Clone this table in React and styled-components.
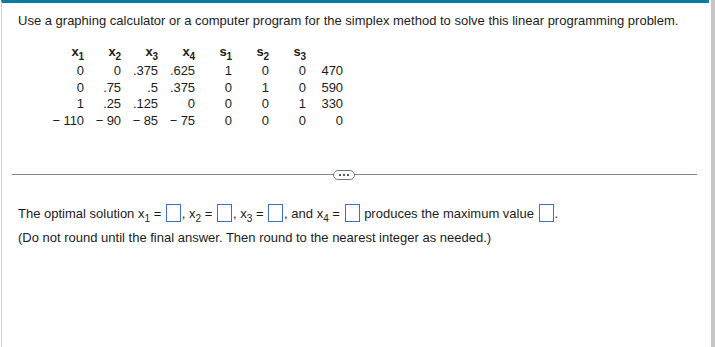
import React from 'react';
import styled, { createGlobalStyle } from 'styled-components';

const GlobalStyle = createGlobalStyle`
  body {
    margin: 0;
    background: #fff;
    font-family: "Liberation Sans", Arial, sans-serif;
    color: #1c1c1c;
  }
`;

const Frame = styled.div`
  width: 715px;
  height: 347px;
  display: flex;
  overflow: hidden;
`;

const Panel = styled.div`
  flex: 1;
  margin-left: 1px;
  border-left: 1px solid #d2d2d6;
  border-top: 3px solid #0a7b9c;
  margin-right: 2px;
  display: flex;
  flex-direction: column;
  align-items: flex-start;
`;

const Scrollbar = styled.div`
  width: 4px;
  background: #c6c6c6;
`;

const Question = styled.div`
  padding: 10px 0 0 16px;
  font-size: 13px;
  line-height: 16px;
  white-space: nowrap;
`;

const Tableau = styled.table`
  margin: 14px 0 0 47px;
  border-collapse: collapse;
  font-size: 13px;
  letter-spacing: -0.1px;
`;

const Head = styled.th`
  width: 35px;
  padding: 2px 2px 0 0;
  text-align: right;
  font-weight: bold;
  height: 18px;
  line-height: 14px;
  vertical-align: top;
  sub {
    font-size: 10px;
    vertical-align: -4px;
    line-height: 0;
  }
`;

const Cell = styled.td`
  width: 35px;
  padding: 0 2px 0 0;
  text-align: right;
  height: 16.5px;
  line-height: 16px;
  white-space: nowrap;
`;

const Divider = styled.div`
  position: relative;
  align-self: stretch;
  margin: 45px 12px 0 10px;
  border-top: 1px solid #7d8796;
`;

const More = styled.div`
  position: absolute;
  left: 321px;
  top: -5px;
  width: 20px;
  height: 8px;
  border: 1px solid #6e7886;
  border-radius: 5px;
  background: #fff;
  display: flex;
  align-items: center;
  justify-content: center;
  gap: 2px;
  span {
    width: 2px;
    height: 2px;
    background: #4f5a68;
  }
`;

const Answer = styled.div`
  padding: 28px 0 0 16px;
  font-size: 13px;
`;

const Line = styled.div`
  line-height: ${p => p.h}px;
  white-space: nowrap;
`;

const Var = styled.span`
  sub {
    font-size: 10px;
    vertical-align: -4px;
    line-height: 0;
  }
`;

const Box = styled.span`
  display: inline-block;
  vertical-align: middle;
  width: 13px;
  height: 16px;
  border: 1px solid #3a70cc;
  margin: -3px 1px 0 1px;
`;

const rows = [
  ['0', '0', '.375', '.625', '1', '0', '0', '470'],
  ['0', '.75', '.5', '.375', '0', '1', '0', '590'],
  ['1', '.25', '.125', '0', '0', '0', '1', '330'],
  ['\u2212 110', '\u2212 90', '\u2212 85', '\u2212 75', '0', '0', '0', '0'],
];

const heads = [['x', 1], ['x', 2], ['x', 3], ['x', 4], ['s', 1], ['s', 2], ['s', 3]];

export default function App() {
  return (
    <>
      <GlobalStyle />
      <Frame>
        <Panel>
          <Question>
            Use a graphing calculator or a computer program for the simplex method to solve this linear programming problem.
          </Question>
          <Tableau>
            <thead>
              <tr>
                {heads.map(([v, n]) => (
                  <Head key={v + n}>{v}<sub>{n}</sub></Head>
                ))}
                <Head />
              </tr>
            </thead>
            <tbody>
              {rows.map((r, i) => (
                <tr key={i}>
                  {r.map((c, j) => <Cell key={j}>{c}</Cell>)}
                </tr>
              ))}
            </tbody>
          </Tableau>
          <Divider>
            <More><span /><span /><span /></More>
          </Divider>
          <Answer>
            <Line h={22}>
              The optimal solution <Var>x<sub>1</sub></Var> = <Box />, <Var>x<sub>2</sub></Var> = <Box />, <Var>x<sub>3</sub></Var> = <Box />, and <Var>x<sub>4</sub></Var> = <Box /> produces the maximum value <Box />.
            </Line>
            <Line h={26}>
              (Do not round until the final answer. Then round to the nearest integer as needed.)
            </Line>
          </Answer>
        </Panel>
        <Scrollbar />
      </Frame>
    </>
  );
}
